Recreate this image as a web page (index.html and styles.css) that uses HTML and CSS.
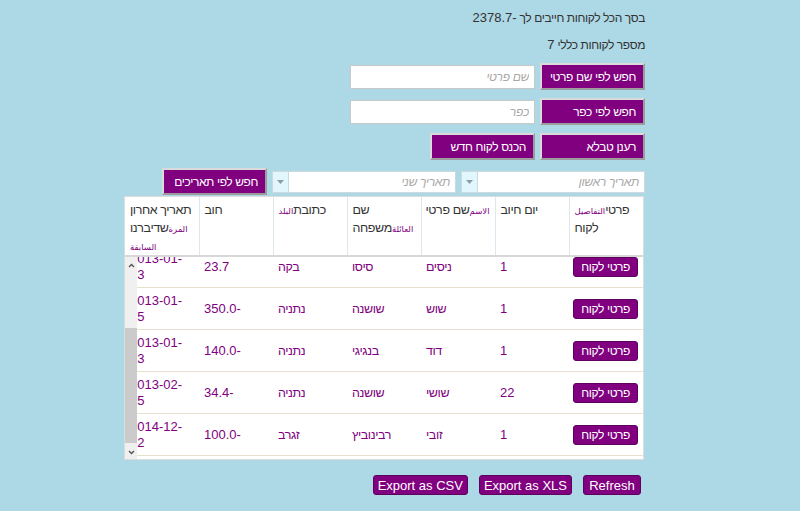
FILE: index.html
```html
<!DOCTYPE html>
<html lang="he" dir="rtl">
<head>
<meta charset="utf-8">
<title>לקוחות</title>
<link rel="stylesheet" href="styles.css">
</head>
<body>
<div class="page">
  <p class="info">בסך הכל לקוחות חייבים לך <span class="num">-2378.7</span></p>
  <p class="info">מספר לקוחות כללי <span class="num">7</span></p>

  <div class="controls">
    <div class="row">
      <button class="btn">חפש לפי שם פרטי</button>
      <input class="field" placeholder="שם פרטי">
    </div>
    <div class="row">
      <button class="btn">חפש לפי כפר</button>
      <input class="field" placeholder="כפר">
    </div>
    <div class="row">
      <button class="btn">רענן טבלא</button>
      <button class="btn">הכנס לקוח חדש</button>
    </div>
    <div class="row">
      <div class="date">
        <input placeholder="תאריך ראשון">
        <span class="drop"><svg width="7" height="4" viewBox="0 0 7 4"><path d="M0 0H7L3.5 4Z" fill="#8c9ea4"/></svg></span>
      </div>
      <div class="date">
        <input placeholder="תאריך שני">
        <span class="drop"><svg width="7" height="4" viewBox="0 0 7 4"><path d="M0 0H7L3.5 4Z" fill="#8c9ea4"/></svg></span>
      </div>
      <button class="btn">חפש לפי תאריכים</button>
    </div>
  </div>

  <div class="grid">
    <table class="head">
      <tr>
        <th><div class="l">פרטי<span class="ar">التفاصيل</span></div><div class="l">לקוח</div></th>
        <th><div class="l">יום חיוב</div></th>
        <th><div class="l"><span class="ar">الاسم</span>שם פרטי</div></th>
        <th><div class="l">שם</div><div class="l"><span class="ar">العائلة</span>משפחה</div></th>
        <th><div class="l">כתובת<span class="ar">البلد</span></div></th>
        <th><div class="l">חוב</div></th>
        <th><div class="l">תאריך אחרון</div><div class="l"><span class="ar">المرة</span>שדיברנו</div><div class="l"><span class="ar">السابقة</span></div></th>
      </tr>
    </table>
    <div class="viewport">
      <table class="body">
        <tr>
          <td><button class="detail">פרטי לקוח</button></td>
          <td class="n">1</td><td>ניסים</td><td>סיסו</td><td>בקה</td><td class="n">23.7</td><td class="n">2013-01-13</td>
        </tr>
        <tr>
          <td><button class="detail">פרטי לקוח</button></td>
          <td class="n">1</td><td>שוש</td><td>שושנה</td><td>נתניה</td><td class="n">-350.0</td><td class="n">2013-01-15</td>
        </tr>
        <tr>
          <td><button class="detail">פרטי לקוח</button></td>
          <td class="n">1</td><td>דוד</td><td>בנגיגי</td><td>נתניה</td><td class="n">-140.0</td><td class="n">2013-01-13</td>
        </tr>
        <tr>
          <td><button class="detail">פרטי לקוח</button></td>
          <td class="n">22</td><td>שושי</td><td>שושנה</td><td>נתניה</td><td class="n">-34.4</td><td class="n">2013-02-25</td>
        </tr>
        <tr>
          <td><button class="detail">פרטי לקוח</button></td>
          <td class="n">1</td><td>זובי</td><td>רבינוביץ</td><td>זגרב</td><td class="n">-100.0</td><td class="n">2014-12-12</td>
        </tr>
      </table>
      <div class="scrollbar">
        <svg class="arrow up" width="7" height="5" viewBox="0 0 7 5"><path d="M1 4L3.5 1.5L6 4" stroke="#505050" stroke-width="1.3" fill="none"/></svg>
        <div class="thumb"></div>
        <svg class="arrow down" width="7" height="5" viewBox="0 0 7 5"><path d="M1 1L3.5 3.5L6 1" stroke="#505050" stroke-width="1.3" fill="none"/></svg>
      </div>
    </div>
  </div>

  <div class="actions">
    <button class="act">Refresh</button>
    <button class="act">Export as XLS</button>
    <button class="act">Export as CSV</button>
  </div>
</div>
</body>
</html>
```

FILE: styles.css
```css
html, body {
  margin: 0;
  padding: 0;
  background: #add8e6;
}

body {
  direction: rtl;
  font-family: "Liberation Sans", Arial, sans-serif;
  font-size: 12px;
  letter-spacing: -0.4px;
  color: #333;
}

.page {
  padding: 9px 155px 0 0;
}

.info {
  height: 17px;
  margin: 0 0 10px;
  line-height: 17px;
  font-size: 12px;
  color: #333;
  white-space: nowrap;
}

.num {
  font-size: 13px;
  letter-spacing: 0;
}

.controls {
  display: flex;
  flex-direction: column;
  gap: 8px;
  margin-bottom: 1px;
}

.row {
  display: flex;
  align-items: center;
  gap: 5px;
  height: 27px;
}

.btn {
  box-sizing: border-box;
  width: 105px;
  height: 27px;
  padding: 0 7px;
  background: #800080;
  color: #fff;
  font-family: "Liberation Sans", Arial, sans-serif;
  font-weight: normal;
  font-size: 12px;
  letter-spacing: -0.4px;
  text-align: right;
  white-space: nowrap;
  border: 2px solid;
  border-color: #dadada #9c9c9c #9c9c9c #dadada;
  border-radius: 0;
}

.field {
  box-sizing: border-box;
  width: 185px;
  height: 24px;
  padding: 0 5px;
  border: 1px solid #c9c9c9;
  background: #fff;
  font-family: "Liberation Sans", Arial, sans-serif;
  font-size: 12px;
  letter-spacing: -0.3px;
  outline: none;
}

.field::placeholder,
.date input::placeholder {
  color: #a8a8a8;
  font-style: italic;
}

.date {
  box-sizing: border-box;
  display: flex;
  width: 184px;
  height: 22px;
  border: 1px solid #cfd8dc;
  background: #fff;
}

.date input {
  flex: 1;
  min-width: 0;
  border: none;
  padding: 0 5px;
  font-family: "Liberation Sans", Arial, sans-serif;
  font-size: 12px;
  letter-spacing: -0.3px;
  background: transparent;
  outline: none;
}

.drop {
  width: 15px;
  display: flex;
  align-items: center;
  justify-content: center;
  background: #e2f7fd;
  border-right: 1px solid #c6dbe2;
}

.grid {
  box-sizing: border-box;
  width: 520px;
  margin: 0 1px 0 0;
  border: 1px solid #dcdcdc;
  background: #fff;
}

.head,
.body {
  width: 100%;
  table-layout: fixed;
  border-collapse: collapse;
}

.head th {
  box-sizing: content-box;
  padding: 4px 5px 0;
  height: 54px;
  vertical-align: top;
  text-align: left;
  font-weight: normal;
  font-size: 12.5px;
  color: #333;
  white-space: nowrap;
  border-bottom: 2px solid #d8d8d8;
}

.head th + th {
  border-right: 1px solid #dde7ee;
}

.l {
  height: 18px;
  line-height: 18px;
}

.ar {
  font-family: "DejaVu Sans", sans-serif;
  font-size: 8.5px;
  line-height: 10px;
  letter-spacing: 0;
  color: #800080;
}

.viewport {
  position: relative;
  height: 202px;
  overflow: hidden;
}

.body {
  margin-top: -11px;
}

.body td {
  height: 41px;
  padding: 0 5px;
  text-align: left;
  vertical-align: middle;
  font-size: 12.5px;
  line-height: 16px;
  color: #800080;
  border-bottom: 1px solid #e9dfcf;
}

.body td.n {
  font-size: 13px;
  letter-spacing: 0;
}

.detail {
  height: 20px;
  padding: 0 7px;
  background: #800080;
  color: #fff;
  border: 1px solid #5e005e;
  border-radius: 3px;
  font-family: "Liberation Sans", Arial, sans-serif;
  font-size: 12px;
  letter-spacing: -0.4px;
  white-space: nowrap;
}

.scrollbar {
  position: absolute;
  left: 0;
  top: 0;
  width: 12px;
  height: 100%;
  background: #f0f0f0;
}

.thumb {
  position: absolute;
  left: 0;
  top: 71px;
  width: 12px;
  height: 115px;
  background: #cbcbcb;
}

.arrow {
  position: absolute;
  left: 3px;
}

.arrow.up {
  top: 6px;
}

.arrow.down {
  bottom: 4px;
}

.actions {
  display: flex;
  gap: 11px;
  margin: 15px 4px 0 0;
}

.act {
  min-width: 58px;
  height: 20px;
  padding: 0 4px;
  background: #800080;
  color: #fff;
  border: 1px solid #5e005e;
  border-radius: 3px;
  font-family: "Liberation Sans", Arial, sans-serif;
  font-size: 13px;
  letter-spacing: 0;
  white-space: nowrap;
}
```
